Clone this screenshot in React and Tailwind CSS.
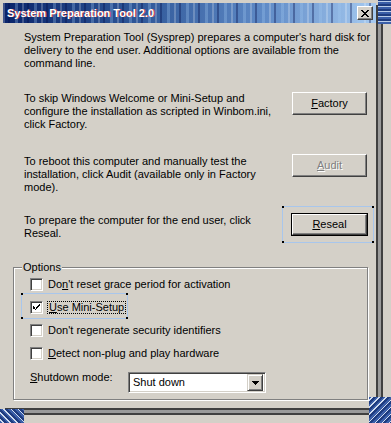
import React from "react";

function RaisedButton({ children, disabled }) {
  return (
    <div className="w-[75px] h-[23px] bg-[#d4d0c8] border border-t-white border-l-white border-r-[#404040] border-b-[#404040] shadow-[inset_-1px_-1px_0_#808080] flex items-center justify-center">
      <span
        className={
          disabled
            ? "text-[#808080] [text-shadow:1px_1px_0_#ffffff]"
            : "text-black"
        }
      >
        {children}
      </span>
    </div>
  );
}

function Corners() {
  return (
    <>
      <span className="absolute -left-[1px] -top-[1px] w-[2px] h-[2px] bg-black" />
      <span className="absolute -right-[1px] -top-[1px] w-[2px] h-[2px] bg-black" />
      <span className="absolute -left-[1px] -bottom-[1px] w-[2px] h-[2px] bg-black" />
      <span className="absolute -right-[1px] -bottom-[1px] w-[2px] h-[2px] bg-black" />
    </>
  );
}

function CheckBox({ checked }) {
  return (
    <div className="w-[13px] h-[13px] shrink-0 bg-white border border-t-[#808080] border-l-[#808080] border-r-white border-b-white shadow-[inset_1px_1px_0_#404040,inset_-1px_-1px_0_#d4d0c8] flex items-center justify-center">
      {checked && (
        <svg width="7" height="7" viewBox="0 0 7 7" shapeRendering="crispEdges">
          <path
            d="M0 2h1v1h-1zM0 3h2v1h-2zM0 4h3v1h-3zM1 5h3v-1h1v-1h1v-1h1v-2h-1v1h-1v1h-1v1h-1v1h-1zM2 6h1v-1h-1z"
            fill="#000"
          />
        </svg>
      )}
    </div>
  );
}

export default function App() {
  return (
    <div className="w-[391px] h-[423px] bg-[#d4d0c8] relative overflow-hidden font-['Liberation_Sans',Arial,sans-serif] text-[11px] leading-[13px] text-black">
      {/* window */}
      <div className="ml-[3px] mt-[3px] w-[373px] h-[405px] bg-[#d4d0c8] flex flex-col shadow-[2px_2px_0_#404040,5px_5px_0_#9a9a9a,7px_7px_0_#404040]">
        {/* title bar */}
        <div className="h-[20px] relative flex items-center bg-[linear-gradient(90deg,#0a246a,#2d5596_35%,#5f8ac6_70%,#a6caf0)]">
          <div className="absolute inset-0 bg-[repeating-linear-gradient(90deg,rgba(255,255,255,0.22)_0px,rgba(255,255,255,0.22)_2px,transparent_2px,transparent_5px,rgba(0,10,70,0.35)_5px,rgba(0,10,70,0.35)_7px,transparent_7px,transparent_12px,rgba(160,200,240,0.3)_12px,rgba(160,200,240,0.3)_15px,transparent_15px,transparent_19px)]" />
          <span className="relative pl-[4px] font-bold text-white [text-shadow:1px_0_0_#c0404a]">
            System Preparation Tool 2.0
          </span>
          <div className="relative ml-auto mr-[3px] w-[16px] h-[14px] bg-[#d4d0c8] border border-t-white border-l-white border-r-[#404040] border-b-[#404040] shadow-[inset_-1px_-1px_0_#808080] flex items-center justify-center">
            <svg width="8" height="7" viewBox="0 0 8 7" shapeRendering="crispEdges">
              <path d="M0 0L7 7M1 0L8 7M7 0L0 7M8 0L1 7" stroke="#000" strokeWidth="1" />
            </svg>
          </div>
        </div>

        {/* intro */}
        <p className="mt-[8px] pl-[21px]">
          System Preparation Tool (Sysprep) prepares a computer's hard disk for
          <br />
          delivery to the end user. Additional options are available from the
          <br />
          command line.
        </p>

        {/* factory */}
        <div className="mt-[22px] pl-[21px] flex">
          <p className="w-[268px]">
            To skip Windows Welcome or Mini-Setup and
            <br />
            configure the installation as scripted in Winbom.ini,
            <br />
            click Factory.
          </p>
          <RaisedButton>
            <u>F</u>actory
          </RaisedButton>
        </div>

        {/* audit */}
        <div className="mt-[23px] pl-[21px] flex">
          <p className="w-[268px] mt-[1px]">
            To reboot this computer and manually test the
            <br />
            installation, click Audit (available only in Factory
            <br />
            mode).
          </p>
          <RaisedButton disabled>
            <u>A</u>udit
          </RaisedButton>
        </div>

        {/* reseal */}
        <div className="mt-[19px] pl-[21px] flex">
          <p className="w-[267px] mt-[1px]">
            To prepare the computer for the end user, click
            <br />
            Reseal.
          </p>
          <div className="relative h-[23px]">
            <div className="absolute -left-[9px] -top-[7px] w-[92px] h-[37px] border border-[#a8c6ec]">
              <Corners />
            </div>
            <div className="relative border border-black">
              <div className="w-[75px] h-[21px] bg-[#d4d0c8] border border-t-white border-l-white border-r-[#404040] border-b-[#404040] shadow-[inset_-1px_-1px_0_#808080] flex items-center justify-center">
                <span>
                  <u>R</u>eseal
                </span>
              </div>
            </div>
          </div>
        </div>

        {/* options group */}
        <div className="relative mt-[27px] ml-[10px] w-[355px] h-[133px] border border-[#808080] shadow-[inset_1px_1px_0_#ffffff,1px_1px_0_#ffffff]">
          <span className="absolute left-[8px] -top-[7px] px-[1px] bg-[#d4d0c8]">
            Options
          </span>
          <div className="pt-[10px] pl-[16px] flex flex-col gap-[10px]">
            <div className="flex items-center gap-[5px] h-[13px]">
              <CheckBox />
              <span>
                Do<u>n</u>'t reset grace period for activation
              </span>
            </div>
            <div className="relative flex items-center gap-[4px] h-[13px]">
              <div className="absolute -left-[9px] -top-[8px] w-[107px] h-[26px] border border-[#a8c6ec]">
                <Corners />
              </div>
              <CheckBox checked />
              <span className="border border-dotted border-black px-[1px] leading-[11px]">
                <u>U</u>se Mini-Setup
              </span>
            </div>
            <div className="flex items-center gap-[5px] h-[13px]">
              <CheckBox />
              <span>Don't regenerate security identifiers</span>
            </div>
            <div className="flex items-center gap-[5px] h-[13px]">
              <CheckBox />
              <span>
                <u>D</u>etect non-plug and play hardware
              </span>
            </div>
            <div className="flex items-start mt-[1px]">
              <span className="w-[98px]">
                <u>S</u>hutdown mode:
              </span>
              <div className="mt-[1px] w-[138px] h-[21px] border border-t-[#808080] border-l-[#808080] border-r-white border-b-white shadow-[inset_1px_1px_0_#404040,inset_-1px_-1px_0_#d4d0c8] bg-white flex items-center p-[2px]">
                <span className="flex-1 pl-[2px]">Shut down</span>
                <div className="w-[16px] h-[17px] bg-[#d4d0c8] border border-t-[#d4d0c8] border-l-[#d4d0c8] border-r-[#404040] border-b-[#404040] shadow-[inset_1px_1px_0_#ffffff,inset_-1px_-1px_0_#808080] flex items-center justify-center">
                  <svg width="7" height="4" viewBox="0 0 7 4" shapeRendering="crispEdges">
                    <path d="M0 0h7v1h-1v1h-1v1h-1v1h-1v-1h-1v-1h-1v-1h-1z" fill="#000" />
                  </svg>
                </div>
              </div>
            </div>
          </div>
        </div>
      </div>

      {/* desktop artifacts */}
      <div className="absolute right-0 top-0 w-[13px] h-[24px] bg-[repeating-linear-gradient(0deg,#3a5ea8_0px,#3a5ea8_2px,#b8cce8_2px,#b8cce8_3px,#1e3c80_3px,#1e3c80_5px)]" />
      <div className="absolute left-0 bottom-0 w-[24px] h-[14px] bg-[repeating-linear-gradient(45deg,#3a5ea8_0px,#3a5ea8_2px,#d0dcf0_2px,#d0dcf0_3px,#1e3c80_3px,#1e3c80_5px)]" />
      <div className="absolute right-0 bottom-0 w-[22px] h-[26px] bg-[repeating-linear-gradient(135deg,#3a5ea8_0px,#3a5ea8_2px,#d0dcf0_2px,#d0dcf0_3px,#1e3c80_3px,#1e3c80_5px)]" />
    </div>
  );
}
